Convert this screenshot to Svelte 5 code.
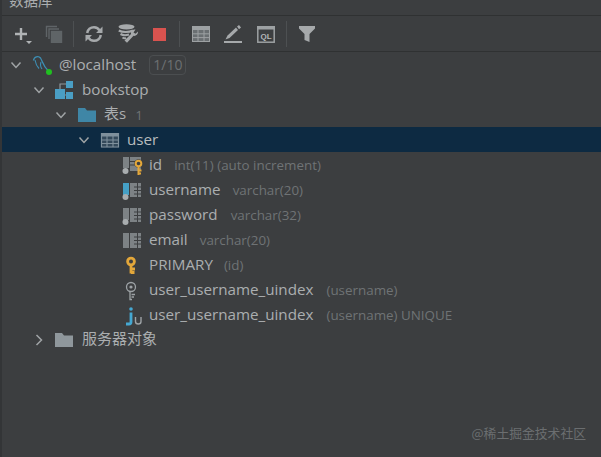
<script>
  // データベースツリーの行データ。icon は下の snippet 内の分岐名に対応する。
  const rows = [
    { depth: 0, open: true, icon: 'mysql', name: '@localhost', badge: '1/10' },
    { depth: 1, open: true, icon: 'schema', name: 'bookstop' },
    { depth: 2, open: true, icon: 'folderBlue', name: '表s', cjk: true, meta: '1', metaGap: 9 },
    { depth: 3, open: true, icon: 'table', name: 'user', selected: true },
    { depth: 4, icon: 'colKey', name: 'id', meta: 'int(11) (auto increment)', metaGap: 12 },
    { depth: 4, icon: 'colBlue', name: 'username', meta: 'varchar(20)', metaGap: 12 },
    { depth: 4, icon: 'colGrey', name: 'password', meta: 'varchar(32)', metaGap: 13 },
    { depth: 4, icon: 'colPlain', name: 'email', meta: 'varchar(20)', metaGap: 12 },
    { depth: 4, icon: 'keyGold', name: 'PRIMARY', meta: '(id)', metaGap: 11 },
    { depth: 4, icon: 'keyGrey', name: 'user_username_uindex', meta: '(username)', metaGap: 13 },
    { depth: 4, icon: 'index', name: 'user_username_uindex', meta: '(username) UNIQUE', metaGap: 13 },
    { depth: 1, open: false, icon: 'folderGrey', name: '服务器对象', cjk: true },
  ];
</script>

{#snippet colBase(barColor, dot)}
  <rect x="0" y="3" width="6" height={dot ? 12 : 15} fill={barColor} />
  <rect x="7" y="3" width="11" height={dot ? 14 : 15} fill="#7d8285" />
  <path d="M11 7H18M11 10.500H18M11 14H18M14.500 3V18" stroke="#3c3e40" stroke-width="1" fill="none" />
  {#if dot}<circle cx="2.500" cy="17" r="3" fill="#a9adaf" />{/if}
{/snippet}

{#snippet chevron(open)}
  <svg class="chev" width="12" height="12" viewBox="0 0 12 12" fill="none" stroke="#a0a4a6" stroke-width="1.500">
    {#if open}<path d="M1.500 3.500L6 8.500L10.500 3.500" />{:else}<path d="M3.500 1L8.500 6L3.500 11" />{/if}
  </svg>
{/snippet}

{#snippet treeIcon(name)}
  <svg class="ico" width="20" height="20" viewBox="0 0 20 20" fill="none">
    {#if name === 'mysql'}
      <path d="M0.500 5.500C1 1.500 5.500 0.500 7.500 3C9.500 6 10 11 15.500 16" stroke="#3d8fb5" stroke-width="1.300" />
      <path d="M2 5C2.500 8 3.500 11 6 13.500M8 7C7 10 7.500 12 9 14" stroke="#3d8fb5" stroke-width="1.100" />
      <circle cx="16" cy="17" r="3" fill="#20c020" />
    {:else if name === 'schema'}
      <path d="M4 9V4H10" stroke="#8f979c" stroke-width="1.200" />
      <rect x="-1" y="9" width="10" height="10" fill="#4a9ec4" />
      <rect x="10" y="1" width="7" height="7" fill="#4a9ec4" />
      <rect x="10" y="12" width="7" height="7" fill="#4a9ec4" />
      <path d="M9 15H10" stroke="#8f979c" stroke-width="1.200" />
    {:else if name === 'folderBlue'}
      <path d="M0 3H7L9 5.500H18V17H0Z" fill="#3f86a6" />
    {:else if name === 'folderGrey'}
      <path d="M-1 3H6L8 5.500H17V17H-1Z" fill="#8f979c" />
    {:else if name === 'table'}
      <rect x="0" y="3" width="18" height="14.500" fill="#34495a" stroke="none" />
      <path d="M0.500 3.500H17.500V17H0.500Z" stroke="#7f909c" stroke-width="1.200" />
      <rect x="0" y="3" width="18" height="3.500" fill="#7f909c" />
      <path d="M0 10H18M0 13.500H18M6 6V17M12 6V17" stroke="#7f909c" stroke-width="1.100" />
    {:else if name === 'colKey'}
      <rect x="0" y="2" width="6" height="11" fill="#7d8285" />
      <rect x="7" y="2" width="11" height="14" fill="#7d8285" />
      <path d="M7 6.500H18M7 10H18" stroke="#3c3e40" stroke-width="1" />
      <circle cx="2.500" cy="16" r="3" fill="#a9adaf" />
      <circle cx="15.500" cy="8.500" r="4.200" fill="#3c3e40" />
      <circle cx="15.500" cy="8.500" r="2.800" stroke="#e3a73a" stroke-width="2" />
      <path d="M15.500 11V20M15.500 15.500H18.500M15.500 18.500H18" stroke="#e3a73a" stroke-width="2" />
    {:else if name === 'colBlue'}
      {@render colBase('#45a0c6', true)}
    {:else if name === 'colGrey'}
      {@render colBase('#7d8285', true)}
    {:else if name === 'colPlain'}
      {@render colBase('#7d8285', false)}
    {:else if name === 'keyGold'}
      <circle cx="8" cy="6.500" r="3.400" stroke="#e3a73a" stroke-width="2.800" />
      <path d="M8 10V18.500M8 14H12M8 17.500H11.500" stroke="#e3a73a" stroke-width="2.800" />
    {:else if name === 'keyGrey'}
      <circle cx="8" cy="7" r="4.500" stroke="#9da2a5" stroke-width="1.300" />
      <circle cx="8" cy="7" r="1.600" fill="#9da2a5" />
      <path d="M7 11.500V19.500H9M8.500 14.500H12M8.500 17H11" stroke="#9da2a5" stroke-width="1.300" />
    {:else if name === 'index'}
      <circle cx="8" cy="4" r="1.800" fill="#45a8d2" />
      <path d="M8 7.500V17Q8 19 6 19H3" stroke="#45a8d2" stroke-width="2.800" />
      <path d="M12.500 12V16.500Q12.500 19 15.300 19Q18 19 18 16.500V12" stroke="#9da2a5" stroke-width="1.400" />
    {/if}
  </svg>
{/snippet}

<div class="panel">
  <header class="title">数据库</header>

  <div class="toolbar">
    <button class="tool add" aria-label="add">
      <svg width="22" height="24" viewBox="0 0 22 24" fill="none">
        <path d="M9 5V17M3 11H15" stroke="#b0b3b5" stroke-width="2.400" />
        <path d="M14 18H20L17 21Z" fill="#b0b3b5" />
      </svg>
    </button>
    <button class="tool dup" aria-label="duplicate">
      <svg width="18" height="18" viewBox="0 0 18 18" fill="none" stroke="#5f6467" stroke-width="1.400">
        <path d="M1.500 12V1.500H12" />
        <path d="M4 14V4H14" />
        <rect x="6.500" y="6.500" width="10" height="11" fill="#5f6467" />
      </svg>
    </button>
    <span class="sep s1"></span>
    <button class="tool sync" aria-label="refresh">
      <svg width="18" height="18" viewBox="0 0 18 18" fill="none" stroke="#a6a9ab" stroke-width="2.500">
        <path d="M2.200 8C2.700 4.500 5.500 2.200 9 2.200C11.500 2.200 13.500 3.500 14.500 5.500M15.800 10C15.300 13.500 12.500 15.800 9 15.800C6.500 15.800 4.500 14.500 3.500 12.500" />
        <path d="M11 8H17.500V1.500Z M7 10H0.500V16.500Z" fill="#a6a9ab" stroke="none" />
      </svg>
    </button>
    <button class="tool config" aria-label="data source properties">
      <svg width="21" height="20" viewBox="0 0 21 20" fill="none">
        <ellipse cx="8.500" cy="2.800" rx="8" ry="2.600" fill="#a6a9ab" />
        <path d="M0.800 6.500C4 8.500 11 8.500 15 6.500M2.500 10C5 11.500 8 11.500 11 10.500M4.500 13.500C6 14.500 7 14.500 8 14" stroke="#a6a9ab" stroke-width="2.100" />
        <path d="M20 7.500A3.800 3.800 0 0 1 15.500 11.800L9 18.800L6.500 16.500L13 10A3.800 3.800 0 0 1 17.500 5.500L15.500 8.500L17.500 9.800Z" fill="#a6a9ab" />
      </svg>
    </button>
    <span class="stop"></span>
    <span class="sep s2"></span>
    <button class="tool tbl" aria-label="table view">
      <svg width="18" height="16" viewBox="0 0 18 16" fill="none">
        <rect x="0" y="0" width="18" height="16" fill="#6a6f72" />
        <rect x="0" y="0" width="18" height="4" fill="#9da1a3" />
        <path d="M0.500 0V16M17.500 0V16M0 15.500H18M0 7.800H18M0 11.600H18M6 4V16M12 4V16" stroke="#9da1a3" stroke-width="1" />
      </svg>
    </button>
    <button class="tool edit" aria-label="edit">
      <svg width="18" height="18" viewBox="0 0 18 18" fill="none">
        <path d="M3.500 10.500L1.500 14.500L5.500 13L14 5L12 2.500Z" fill="#a6a9ab" />
        <path d="M13 1.500L15 0L17 2.500L15 4.200Z" fill="#a6a9ab" />
        <rect x="0" y="16" width="18" height="2" fill="#a6a9ab" />
      </svg>
    </button>
    <button class="tool console" aria-label="sql console">
      <svg width="18" height="17" viewBox="0 0 18 17" fill="none">
        <rect x="0.800" y="0.800" width="16.400" height="15.400" stroke="#9da1a3" stroke-width="1.500" />
        <rect x="0" y="0" width="18" height="3.500" fill="#9da1a3" />
        <text x="9" y="12.500" text-anchor="middle" class="ql">QL</text>
      </svg>
    </button>
    <span class="sep s3"></span>
    <button class="tool filter" aria-label="filter">
      <svg width="16" height="16" viewBox="0 0 16 16"><path d="M0 0H16V2.500L10.500 8V16L5.500 14V8L0 2.500Z" fill="#a6a9ab" /></svg>
    </button>
  </div>

  <div class="tree">
    {#each rows as row}
      <div class="row" class:selected={row.selected}>
        <span class="indent" style="width: {Math.round(8 + row.depth * 22.5)}px"></span>
        <span class="arrow">
          {#if row.open !== undefined}{@render chevron(row.open)}{/if}
        </span>
        {@render treeIcon(row.icon)}
        <span class="name" class:cjk={row.cjk}>{row.name}</span>
        {#if row.badge}<span class="badge">{row.badge}</span>{/if}
        {#if row.meta}<span class="meta" style="margin-left: {row.metaGap}px">{row.meta}</span>{/if}
      </div>
    {/each}
  </div>

  <div class="watermark">@稀土掘金技术社区</div>
</div>

<style>
  :global(body) {
    margin: 0;
    background: #3c3e40;
  }
  .panel {
    position: relative;
    width: 601px;
    height: 457px;
    overflow: hidden;
    background: #3c3e40;
    border-left: 2px solid #333537;
    box-sizing: border-box;
    font-family: 'Open Sans', 'Noto Sans CJK SC', sans-serif;
    color: #abaeb0;
  }
  .title {
    height: 15px;
    border-bottom: 1px solid #2f3132;
    padding-left: 7px;
    font-size: 14.500px;
    line-height: 0;
    font-family: 'Noto Sans CJK SC', sans-serif;
    overflow: hidden;
  }
  .toolbar {
    height: 34px;
    padding: 1px 0 0 10px;
    border-bottom: 1px solid #2f3132;
    display: flex;
    align-items: center;
  }
  .tool {
    all: unset;
    display: flex;
    align-items: center;
    justify-content: center;
  }
  .tool svg {
    display: block;
  }
  .add {
    margin-top: 2px;
  }
  .dup {
    margin-left: 11px;
  }
  .sep {
    width: 1px;
    height: 26px;
    background: #4d5052;
  }
  .s1 {
    margin: 0 11px 0 10px;
  }
  .config {
    margin-left: 15px;
  }
  .stop {
    width: 13px;
    height: 13px;
    background: #d9534f;
    margin-left: 14px;
  }
  .s2 {
    margin: 0 12px 0 13px;
  }
  .edit {
    margin-left: 14px;
  }
  .console {
    margin-left: 15px;
  }
  .s3 {
    margin: 0 12px 0 11px;
  }
  .ql {
    font: bold 8px 'Liberation Sans', sans-serif;
    fill: #b4b7b9;
  }
  .tree {
    display: flex;
    flex-direction: column;
  }
  .row {
    height: 25px;
    display: flex;
    align-items: center;
    white-space: nowrap;
    font-size: 15.200px;
  }
  .row.selected {
    background: #0d2a42;
    color: #b8bcbe;
  }
  .indent {
    flex: none;
  }
  .arrow {
    width: 12px;
    height: 12px;
    flex: none;
    margin-right: 11px;
  }
  .chev {
    display: block;
  }
  .ico {
    flex: none;
    margin-right: 6px;
    overflow: visible;
  }
  .name {
    margin-bottom: 2px;
  }
  .name.cjk {
    margin-bottom: 4px;
    font-size: 15px;
  }
  .badge {
    margin-left: 13px;
    padding: 0 3px;
    height: 18px;
    line-height: 18px;
    font-size: 14px;
    color: #6c7072;
    border: 1px solid #4b4e50;
    border-radius: 4px;
  }
  .meta {
    font-size: 13.400px;
    color: #6f7375;
  }
  .watermark {
    position: absolute;
    right: 15px;
    bottom: 15px;
    font-family: 'Noto Sans CJK SC', sans-serif;
    font-size: 12.800px;
    color: #6b6e70;
  }
</style>
